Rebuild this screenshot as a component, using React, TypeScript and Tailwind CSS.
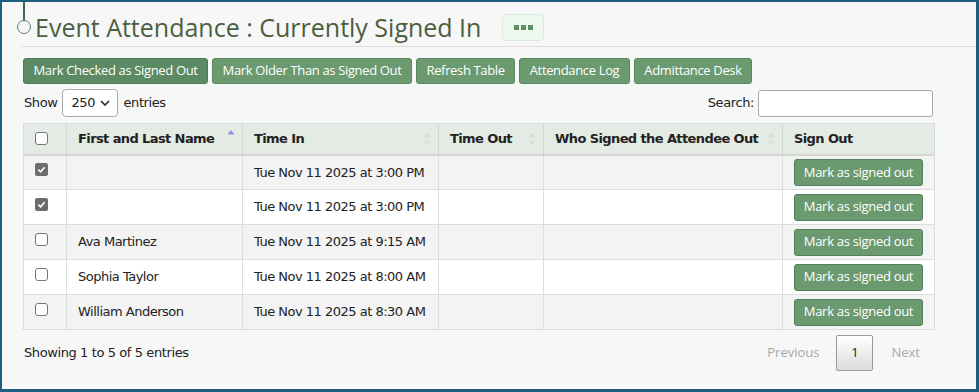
import React from 'react';

const body = { fontFamily: '"DejaVu Sans", Verdana, sans-serif' };
const open = { fontFamily: '"Open Sans", "Noto Sans", sans-serif' };

const rows = [
  { checked: true, name: '', time: 'Tue Nov 11 2025 at 3:00 PM' },
  { checked: true, name: '', time: 'Tue Nov 11 2025 at 3:00 PM' },
  { checked: false, name: 'Ava Martinez', time: 'Tue Nov 11 2025 at 9:15 AM' },
  { checked: false, name: 'Sophia Taylor', time: 'Tue Nov 11 2025 at 8:00 AM' },
  { checked: false, name: 'William Anderson', time: 'Tue Nov 11 2025 at 8:30 AM' },
];

function Box({ checked }: { checked: boolean }) {
  if (checked) {
    return (
      <span className="flex h-[13px] w-[13px] items-center justify-center rounded-[2px] bg-[#6d6d6d]">
        <svg width="9" height="9" viewBox="0 0 10 10">
          <path d="M1.5 5.2 L4 7.5 L8.5 2.5" fill="none" stroke="#fff" strokeWidth="1.8" />
        </svg>
      </span>
    );
  }
  return <span className="block h-[13px] w-[13px] rounded-[3px] border border-[#767676] bg-white" />;
}

function SortBoth() {
  return (
    <svg width="8" height="14" viewBox="0 0 8 14">
      <path d="M4 1 L7.5 5.5 H0.5 Z" fill="#d8dcd8" />
      <path d="M4 13 L7.5 8.5 H0.5 Z" fill="#d8dcd8" />
    </svg>
  );
}

function SortUp() {
  return (
    <svg width="8" height="14" viewBox="0 0 8 14" className="-mt-[6px]">
      <path d="M4 1 L7.5 5.5 H0.5 Z" fill="#8a8fe4" />
    </svg>
  );
}

function Btn({ children, dark }: { children: React.ReactNode; dark?: boolean }) {
  return (
    <button
      style={open}
      className={
        'h-[26px] rounded-[3px] border px-[9.5px] text-[13px] tracking-[-0.35px] text-white ' +
        (dark ? 'border-[#4f7b57] bg-[#5b8a63]' : 'border-[#5a8662] bg-[#6b9a70]')
      }
    >
      {children}
    </button>
  );
}

export default function App() {
  const th = 'h-[31px] border-b-2 border-r border-[#d3d8d3] bg-[#e4ebe4] pl-[11px] pr-[7px] text-left font-bold whitespace-nowrap';
  const td = 'h-[35px] border-b border-r border-[#dddddd] px-[11px] whitespace-nowrap';

  return (
    <div className="h-[392px] w-[979px] overflow-hidden border-t-2 border-l-2 border-r-[3px] border-b-[3px] border-[#1e5e7e] bg-[#f7f7f7] text-[#222]">
      <div className="flex h-[44px] items-start pl-[15px]">
        <div className="flex w-[14px] flex-col items-center">
          <div className="h-[18px] w-[2px] bg-[#3e6b4a]" />
          <div className="h-[14px] w-[14px] rounded-full border-[1.5px] border-[#5c7f76]" />
        </div>
        <h1 style={open} className="ml-[4px] mt-[9px] text-[25px] leading-[32px] text-[#4a5f3f]">
          Event Attendance : Currently Signed In
        </h1>
        <button className="ml-[21px] mt-[12px] flex h-[27px] w-[42px] items-center justify-center gap-[2px] rounded-[4px] border border-[#d9ecd9] bg-[#eef8ee]">
          <span className="h-[5px] w-[5px] bg-[#5f8d62]" />
          <span className="h-[5px] w-[5px] bg-[#5f8d62]" />
          <span className="h-[5px] w-[5px] bg-[#5f8d62]" />
        </button>
      </div>
      <div className="ml-[19px] h-px bg-[#dcdcdc]" />

      <div className="pl-[21px] pr-[41px]" style={body}>
        <div className="mt-[11px] flex gap-[4px]">
          <Btn dark>Mark Checked as Signed Out</Btn>
          <Btn>Mark Older Than as Signed Out</Btn>
          <Btn>Refresh Table</Btn>
          <Btn>Attendance Log</Btn>
          <Btn>Admittance Desk</Btn>
        </div>

        <div className="mt-[5px] flex h-[28px] items-center justify-between text-[13px] tracking-[-0.4px]">
          <div className="flex items-center">
            <span className="ml-[1px]">Show</span>
            <div className="ml-[5px] flex h-[28px] w-[56px] items-center justify-between rounded-[4px] border border-[#aaaaaa] bg-white pl-[8px] pr-[7px]">
              <span>250</span>
              <svg width="10" height="6" viewBox="0 0 10 6">
                <path d="M1 1 L5 5 L9 1" fill="none" stroke="#222" strokeWidth="1.6" />
              </svg>
            </div>
            <span className="ml-[5px]">entries</span>
          </div>
          <div className="flex items-center">
            <span>Search:</span>
            <div className="ml-[4px] mr-[2px] h-[27px] w-[175px] rounded-[3px] border border-[#aaaaaa] bg-white" />
          </div>
        </div>

        <table className="mt-[6px] w-[912px] table-fixed border-collapse border-l border-t border-[#dddddd] text-[13px] tracking-[-0.5px]">
          <colgroup>
            <col className="w-[43px]" />
            <col className="w-[176px]" />
            <col className="w-[196px]" />
            <col className="w-[105px]" />
            <col className="w-[239px]" />
            <col className="w-[152px]" />
          </colgroup>
          <thead>
            <tr>
              <th className={th}>
                <Box checked={false} />
              </th>
              <th className={th}>
                <div className="flex items-center justify-between">
                  <span className="tracking-[-0.6px]">First and Last Name</span>
                  <SortUp />
                </div>
              </th>
              <th className={th}>
                <div className="flex items-center justify-between">
                  <span className="tracking-[-0.6px]">Time In</span>
                  <SortBoth />
                </div>
              </th>
              <th className={th}>
                <div className="flex items-center justify-between">
                  <span className="tracking-[-0.6px]">Time Out</span>
                  <SortBoth />
                </div>
              </th>
              <th className={th}>
                <div className="flex items-center justify-between">
                  <span className="tracking-[-0.6px]">Who Signed the Attendee Out</span>
                  <SortBoth />
                </div>
              </th>
              <th className={th}>
                <span className="tracking-[-0.6px]">Sign Out</span>
              </th>
            </tr>
          </thead>
          <tbody>
            {rows.map((r, i) => (
              <tr key={i} className={i % 2 === 0 ? 'bg-[#f3f3f3]' : 'bg-white'}>
                <td className={td}>
                  <div className="-mt-[6px]">
                    <Box checked={r.checked} />
                  </div>
                </td>
                <td className={td}>{r.name}</td>
                <td className={td}>{r.time}</td>
                <td className={td} />
                <td className={td} />
                <td className={td}>
                  <button
                    style={open}
                    className="h-[27px] w-[129px] rounded-[3px] border border-[#52805a] bg-[#6b9a70] text-[13px] tracking-[-0.3px] text-white"
                  >
                    Mark as signed out
                  </button>
                </td>
              </tr>
            ))}
          </tbody>
        </table>

        <div className="mt-[5px] flex items-center justify-between text-[13px] tracking-[-0.4px]">
          <span className="ml-[1px]">Showing 1 to 5 of 5 entries</span>
          <div style={open} className="mr-[15px] flex items-center text-[13px] tracking-normal">
            <span className="text-[#a8a8a8]">Previous</span>
            <span className="ml-[17px] flex h-[36px] w-[37px] items-center justify-center rounded-[2px] border border-[#9a9a9a] bg-gradient-to-b from-white to-[#dcdcdc] text-[#222]">
              1
            </span>
            <span className="ml-[18px] text-[#a8a8a8]">Next</span>
          </div>
        </div>
      </div>
    </div>
  );
}
